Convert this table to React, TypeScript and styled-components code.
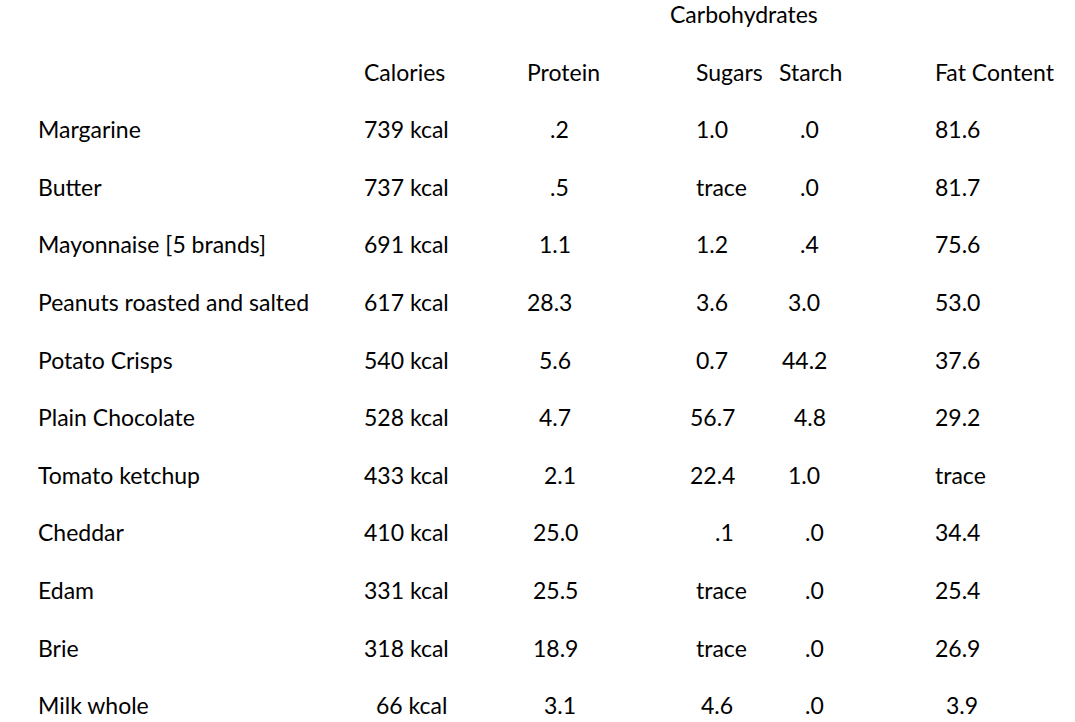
import styled, { createGlobalStyle } from 'styled-components';

const GlobalStyle = createGlobalStyle`
  html, body {
    margin: 0;
    padding: 0;
    background: #ffffff;
  }
  body {
    font-family: Lato, 'Open Sans', sans-serif;
    color: #000000;
  }
`;

const Sheet = styled('div')`
  width: 1075px;
  height: 722px;
  overflow: hidden;
  padding-left: 38px;
  box-sizing: border-box;
  display: grid;
  grid-auto-rows: 57.6px;
`;

const Row = styled('div')`
  display: grid;
  grid-template-columns: 326px 163px 163px 89px 156px 1fr;
  align-items: start;
`;

const Cell = styled('div')<{ $indent?: number; $span?: string }>`
  font-size: 23px;
  line-height: 28px;
  white-space: nowrap;
  padding-left: ${(p) => p.$indent ?? 0}px;
  ${(p) => (p.$span ? `grid-column: ${p.$span};` : '')}
`;

type Value = [string, number];

interface Food {
  name: string;
  calories: Value;
  protein: Value;
  sugars: Value;
  starch: Value;
  fat: Value;
}

const foods: Food[] = [
  { name: 'Margarine', calories: ['739 kcal', 0], protein: ['.2', 23], sugars: ['1.0', 6], starch: ['.0', 21], fat: ['81.6', 0] },
  { name: 'Butter', calories: ['737 kcal', 0], protein: ['.5', 23], sugars: ['trace', 6], starch: ['.0', 21], fat: ['81.7', 0] },
  { name: 'Mayonnaise [5 brands]', calories: ['691 kcal', 0], protein: ['1.1', 12], sugars: ['1.2', 6], starch: ['.4', 21], fat: ['75.6', 0] },
  { name: 'Peanuts roasted and salted', calories: ['617 kcal', 0], protein: ['28.3', 0], sugars: ['3.6', 6], starch: ['3.0', 9], fat: ['53.0', 0] },
  { name: 'Potato Crisps', calories: ['540 kcal', 0], protein: ['5.6', 12], sugars: ['0.7', 6], starch: ['44.2', 3], fat: ['37.6', 0] },
  { name: 'Plain Chocolate', calories: ['528 kcal', 0], protein: ['4.7', 12], sugars: ['56.7', 0], starch: ['4.8', 15], fat: ['29.2', 0] },
  { name: 'Tomato ketchup', calories: ['433 kcal', 0], protein: ['2.1', 17], sugars: ['22.4', 0], starch: ['1.0', 9], fat: ['trace', 0] },
  { name: 'Cheddar', calories: ['410 kcal', 0], protein: ['25.0', 6], sugars: ['.1', 25], starch: ['.0', 26], fat: ['34.4', 0] },
  { name: 'Edam', calories: ['331 kcal', 0], protein: ['25.5', 6], sugars: ['trace', 6], starch: ['.0', 26], fat: ['25.4', 0] },
  { name: 'Brie', calories: ['318 kcal', 0], protein: ['18.9', 6], sugars: ['trace', 6], starch: ['.0', 26], fat: ['26.9', 0] },
  { name: 'Milk whole', calories: ['66 kcal', 12], protein: ['3.1', 17], sugars: ['4.6', 11], starch: ['.0', 26], fat: ['3.9', 11] },
];

const App = () => {
  return (
    <>
      <GlobalStyle />
      <Sheet>
        <Row>
          <Cell $span='3 / 7' $indent={143}>
            Carbohydrates
          </Cell>
        </Row>
        <Row>
          <Cell />
          <Cell>Calories</Cell>
          <Cell>Protein</Cell>
          <Cell $indent={6}>Sugars</Cell>
          <Cell>Starch</Cell>
          <Cell>Fat Content</Cell>
        </Row>
        {foods.map((food) => (
          <Row key={food.name}>
            <Cell>{food.name}</Cell>
            <Cell $indent={food.calories[1]}>{food.calories[0]}</Cell>
            <Cell $indent={food.protein[1]}>{food.protein[0]}</Cell>
            <Cell $indent={food.sugars[1]}>{food.sugars[0]}</Cell>
            <Cell $indent={food.starch[1]}>{food.starch[0]}</Cell>
            <Cell $indent={food.fat[1]}>{food.fat[0]}</Cell>
          </Row>
        ))}
      </Sheet>
    </>
  );
};

export default App;
